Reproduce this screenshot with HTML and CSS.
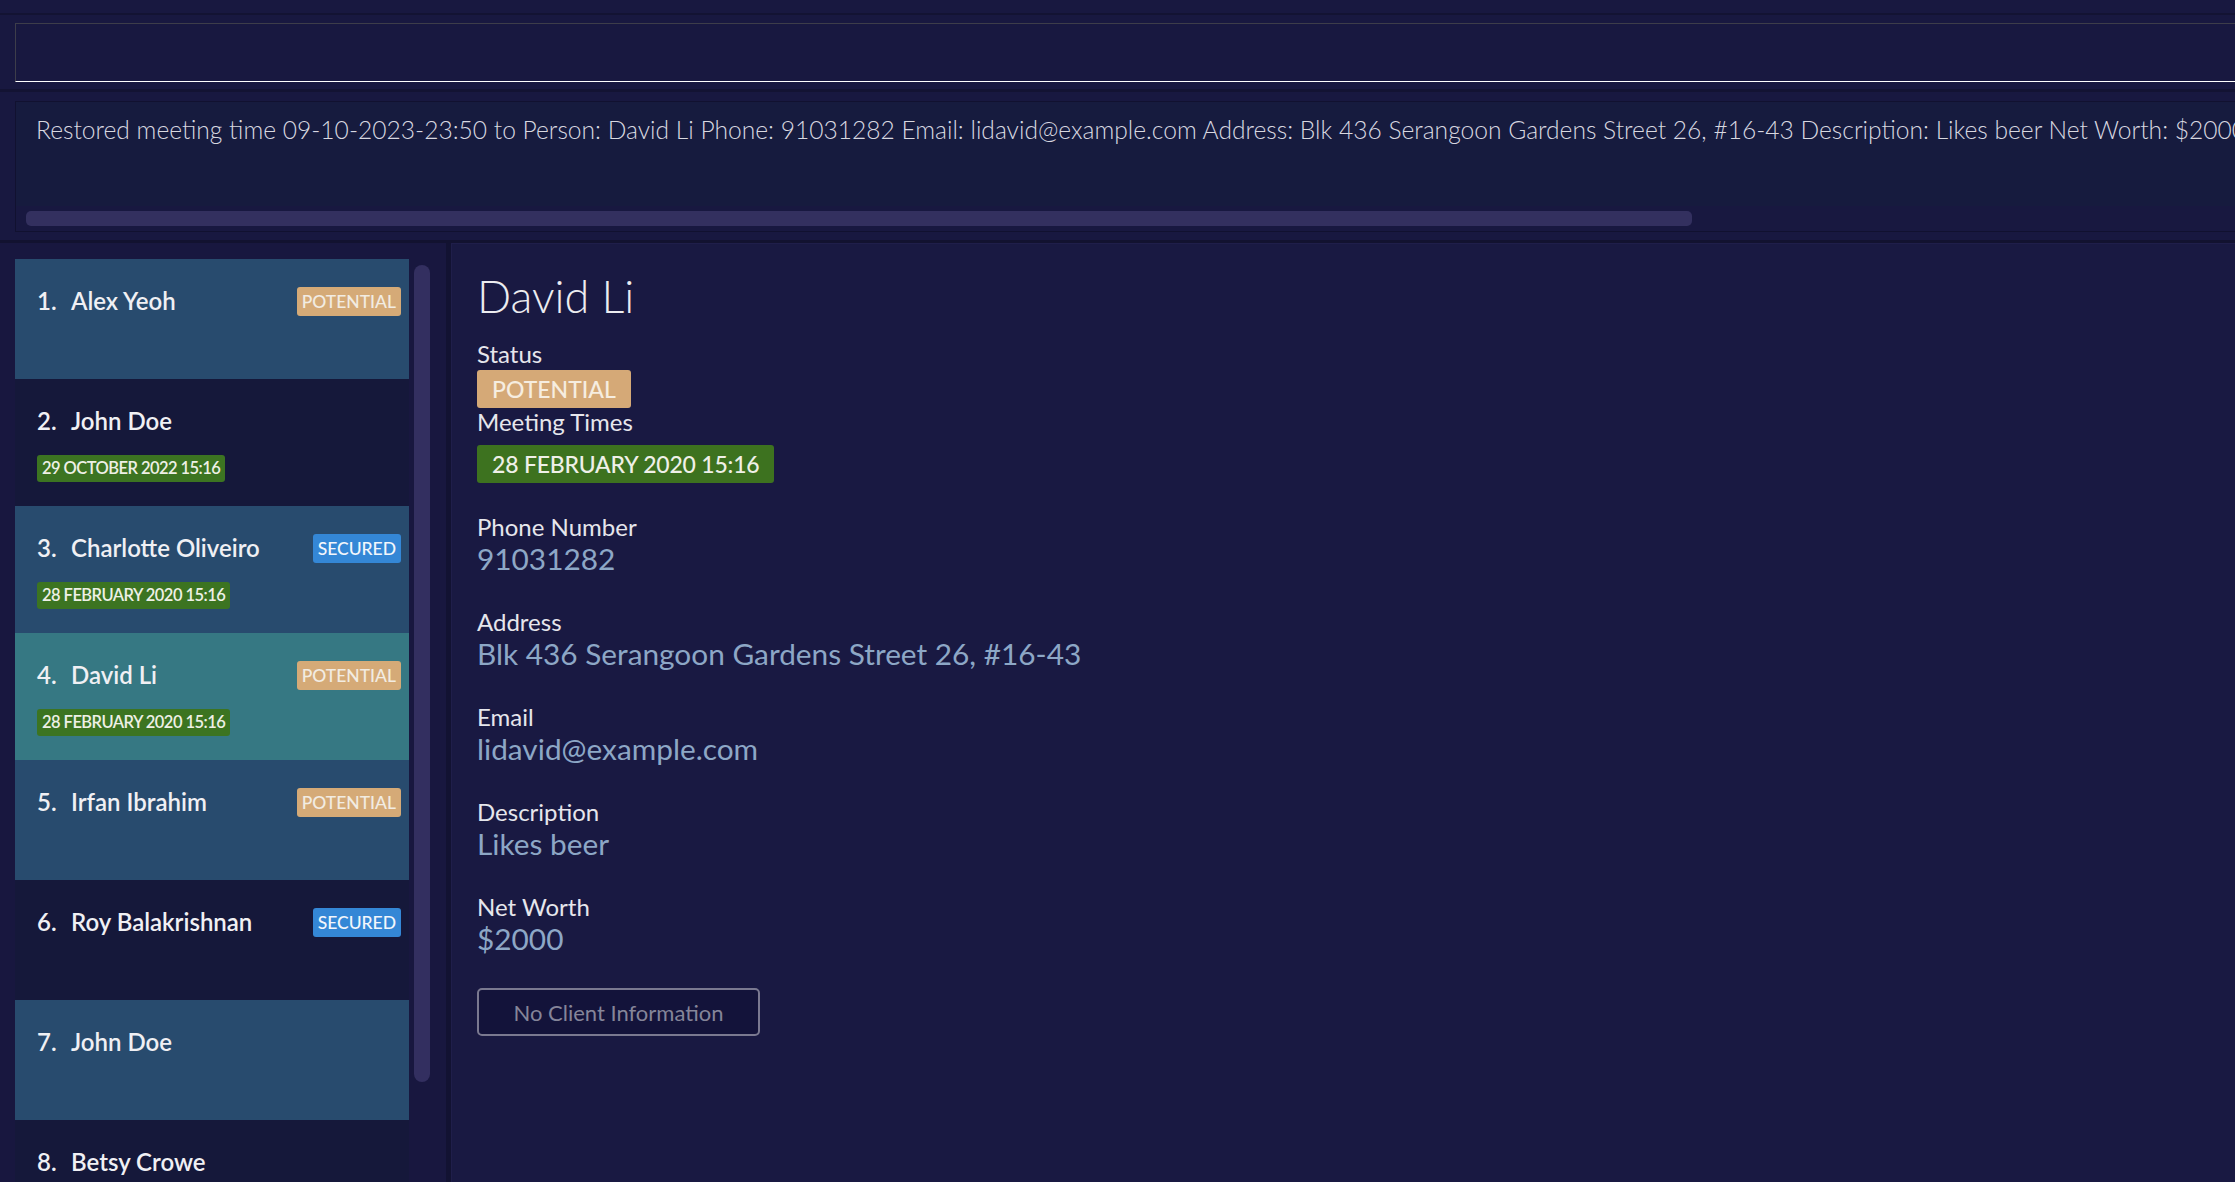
FILE: index.html
```html
<!DOCTYPE html>
<html lang="en">
<head>
<meta charset="utf-8">
<title>Address Book</title>
<link rel="stylesheet" href="styles.css">
</head>
<body>
<div class="app">
  <div class="menubar"></div>

  <div class="cmd-pane">
    <div class="cmd-box"></div>
  </div>

  <div class="result-pane">
    <div class="result-box">
      <div class="result-text">Restored meeting time 09-10-2023-23:50 to Person: David Li Phone: 91031282 Email: lidavid@example.com Address: Blk 436 Serangoon Gardens Street 26, #16-43 Description: Likes beer Net Worth: $2000 Status: POTENTIAL</div>
      <div class="hscroll"><div class="hthumb"></div></div>
    </div>
  </div>

  <div class="main">
    <div class="list-pane">
      <div class="list">
        <div class="cell odd">
          <div class="name-row"><span class="cell-name"><span class="idx">1.</span>Alex Yeoh</span><span class="tag potential">POTENTIAL</span></div>
        </div>
        <div class="cell even dated">
          <div class="name-row"><span class="cell-name"><span class="idx">2.</span>John Doe</span></div>
          <div class="date-tag">29 OCTOBER 2022 15:16</div>
        </div>
        <div class="cell odd dated">
          <div class="name-row"><span class="cell-name"><span class="idx">3.</span>Charlotte Oliveiro</span><span class="tag secured">SECURED</span></div>
          <div class="date-tag">28 FEBRUARY 2020 15:16</div>
        </div>
        <div class="cell selected dated">
          <div class="name-row"><span class="cell-name"><span class="idx">4.</span>David Li</span><span class="tag potential">POTENTIAL</span></div>
          <div class="date-tag">28 FEBRUARY 2020 15:16</div>
        </div>
        <div class="cell odd">
          <div class="name-row"><span class="cell-name"><span class="idx">5.</span>Irfan Ibrahim</span><span class="tag potential">POTENTIAL</span></div>
        </div>
        <div class="cell even">
          <div class="name-row"><span class="cell-name"><span class="idx">6.</span>Roy Balakrishnan</span><span class="tag secured">SECURED</span></div>
        </div>
        <div class="cell odd">
          <div class="name-row"><span class="cell-name"><span class="idx">7.</span>John Doe</span></div>
        </div>
        <div class="cell even">
          <div class="name-row"><span class="cell-name"><span class="idx">8.</span>Betsy Crowe</span></div>
        </div>
      </div>
      <div class="vscroll"></div>
    </div>

    <div class="divider"></div>

    <div class="detail">
      <div class="title">David Li</div>
      <div class="label">Status</div>
      <div class="badge potential-big">POTENTIAL</div>
      <div class="label">Meeting Times</div>
      <div class="badge date-big">28 FEBRUARY 2020 15:16</div>

      <div class="field first">
        <div class="label">Phone Number</div>
        <div class="value">91031282</div>
      </div>
      <div class="field">
        <div class="label">Address</div>
        <div class="value">Blk 436 Serangoon Gardens Street 26, #16-43</div>
      </div>
      <div class="field">
        <div class="label">Email</div>
        <div class="value">lidavid@example.com</div>
      </div>
      <div class="field">
        <div class="label">Description</div>
        <div class="value">Likes beer</div>
      </div>
      <div class="field">
        <div class="label">Net Worth</div>
        <div class="value">$2000</div>
      </div>
      <button class="info-btn" type="button">No Client Information</button>
    </div>
  </div>
</div>
</body>
</html>
```

FILE: styles.css
```css
* { box-sizing: border-box; }

html, body {
  margin: 0;
  padding: 0;
  width: 2235px;
  height: 1182px;
  overflow: hidden;
  background: #181840;
  font-family: "Lato", "Open Sans", sans-serif;
}

.app {
  display: flex;
  flex-direction: column;
  width: 2235px;
  height: 1182px;
  overflow: hidden;
}

/* menu bar (scrolled out of view) */
.menubar {
  flex: none;
  height: 15px;
  border-bottom: 2px solid #131333;
}

/* command box */
.cmd-pane {
  flex: none;
  height: 77px;
  padding: 8px 0 0 15px;
  border-bottom: 3px solid #131333;
}
.cmd-box {
  width: 2300px;
  height: 59px;
  background: #181840;
  border-top: 1px solid #3d3d4a;
  border-left: 1px solid #3d3d4a;
  border-bottom: 1px solid #ffffff;
}

/* result display */
.result-pane {
  flex: none;
  height: 151px;
  padding: 9px 0 0 15px;
  border-bottom: 3px solid #121230;
}
.result-box {
  width: 2300px;
  height: 131px;
  border: 1px solid #111130;
  display: flex;
  flex-direction: column;
}
.result-text {
  flex: none;
  height: 104px;
  background: #161b3e;
  color: #d8d8e0;
  font-size: 24.6px;
  font-weight: 300;
  line-height: 30px;
  padding: 13px 0 0 20px;
  white-space: nowrap;
  overflow: hidden;
}
.hscroll {
  flex: 1;
  background: #181840;
  padding: 5px 0 0 10px;
}
.hthumb {
  width: 1666px;
  height: 15px;
  border-radius: 5px;
  background: #33305f;
}

/* main area */
.main {
  flex: 1;
  display: flex;
  min-height: 0;
}

.list-pane {
  flex: none;
  width: 446px;
  display: flex;
  padding: 16px 0 0 15px;
  overflow: hidden;
  background: #18173f;
}
.list {
  flex: none;
  width: 394px;
  display: flex;
  flex-direction: column;
}
.cell {
  flex: none;
  min-height: 120px;
  padding: 26px 8px 0 22px;
}
.cell.dated { padding-bottom: 24px; }
.cell.odd { background: #284b6e; }
.cell.even { background: #15183a; }
.cell.selected { background: #367883; }

.name-row {
  display: flex;
  align-items: center;
  justify-content: space-between;
  height: 31px;
}
.cell-name {
  color: #f0f0f4;
  font-size: 24px;
  font-weight: 600;
  line-height: 29px;
  white-space: nowrap;
}
.idx {
  display: inline-block;
  width: 34px;
}
.tag {
  display: inline-block;
  margin-top: 2px;
  padding: 3px 5px;
  border-radius: 3px;
  font-size: 17.5px;
  line-height: 23px;
  font-weight: 500;
  color: #f2ece2;
}
.tag.potential { background: #d5aa77; }
.tag.secured { background: #3487d6; color: #f2f6fc; }

.date-tag {
  display: inline-block;
  margin-top: 19px;
  padding: 3px 5px;
  border-radius: 3px;
  background: #3c7421;
  color: #eef0e6;
  font-size: 16.5px;
  letter-spacing: -0.55px;
  line-height: 21px;
  font-weight: 600;
}

.vscroll {
  flex: none;
  width: 16px;
  height: 817px;
  margin: 6px 0 0 5px;
  border-radius: 8px;
  background: #332f60;
}

.divider {
  flex: none;
  width: 5px;
  background: #121232;
}

/* detail panel */
.detail {
  flex: 1;
  background: #191942;
  border-top: 1px solid #1f1e4a;
  border-left: 1px solid #1f1e4a;
  padding: 24px 0 0 25px;
  display: flex;
  flex-direction: column;
  align-items: flex-start;
}
.title {
  color: #ececf0;
  font-size: 45px;
  font-weight: 300;
  line-height: 56px;
  margin-bottom: 16px;
}
.label {
  color: #e6e6ec;
  font-size: 24px;
  line-height: 28px;
}
.badge {
  height: 38px;
  padding: 0 15px;
  border-radius: 3px;
  font-size: 23px;
  line-height: 38px;
  font-weight: 500;
}
.potential-big {
  margin-top: 2px;
  background: #d5a977;
  color: #f6ede0;
}
.date-big {
  margin-top: 9px;
  background: #3d721f;
  color: #eff0e8;
  letter-spacing: -0.2px;
}
.field { margin-top: 32px; }
.field.first { margin-top: 30px; }
.value {
  color: #8da7c6;
  font-size: 29.8px;
  line-height: 35px;
}
.info-btn {
  margin-top: 32px;
  width: 283px;
  height: 48px;
  border: 2px solid #7a7990;
  border-radius: 5px;
  background: #13133a;
  color: #858599;
  font-family: "Lato", "Open Sans", sans-serif;
  font-size: 22px;
  padding: 0;
}
```
